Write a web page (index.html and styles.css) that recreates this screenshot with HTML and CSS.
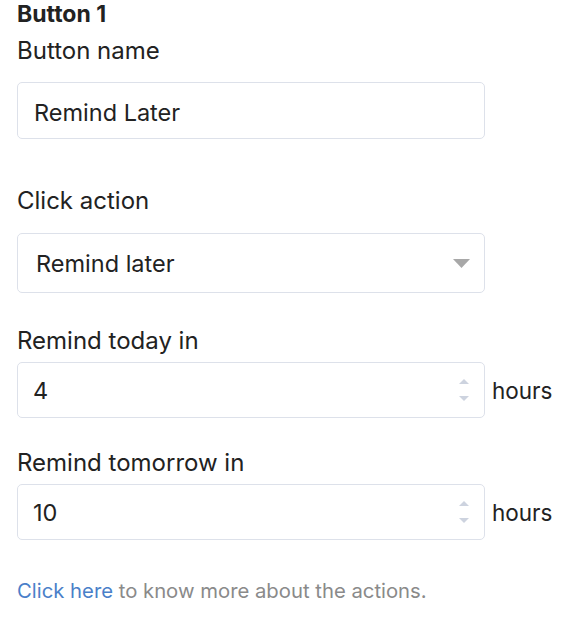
FILE: index.html
```html
<!DOCTYPE html>
<html>
<head>
    <title>Button 1</title>
    <link rel="stylesheet" href="styles.css">
</head>
<body>
    <div class="panel">
        <h3 class="title">Button 1</h3>

        <label class="field-label label-name" for="btn-name">Button name</label>
        <input class="text-box name-box" type="text" id="btn-name" value="Remind Later">

        <label class="field-label label-action" for="click-action">Click action</label>
        <div class="select-wrap">
            <select class="select-box" id="click-action">
                <option>Remind later</option>
                <option>Close</option>
                <option>Open link</option>
            </select>
            <svg class="select-arrow" width="17" height="9" viewBox="0 0 17 9">
                <path d="M0 0 L17 0 L8.5 9 Z" fill="#a8a8a8"/>
            </svg>
        </div>

        <label class="field-label label-today" for="remind-today">Remind today in</label>
        <div class="number-row">
            <div class="number-wrap">
                <input class="text-box number-box" type="text" id="remind-today" value="4">
                <svg class="spinner" width="12" height="26" viewBox="0 0 12 26">
                    <path d="M1 7 L6 2 L11 7 Z" fill="#cdd3df"/>
                    <path d="M1 19 L6 24 L11 19 Z" fill="#cdd3df"/>
                </svg>
            </div>
            <span class="unit">hours</span>
        </div>

        <label class="field-label label-tomorrow" for="remind-tomorrow">Remind tomorrow in</label>
        <div class="number-row">
            <div class="number-wrap">
                <input class="text-box number-box" type="text" id="remind-tomorrow" value="10">
                <svg class="spinner" width="12" height="26" viewBox="0 0 12 26">
                    <path d="M1 7 L6 2 L11 7 Z" fill="#cdd3df"/>
                    <path d="M1 19 L6 24 L11 19 Z" fill="#cdd3df"/>
                </svg>
            </div>
            <span class="unit">hours</span>
        </div>

        <p class="help"><a href="#">Click here</a> to know more about the actions.</p>
    </div>
</body>
</html>
```

FILE: styles.css
```css
body {
    font-family: Inter, "Open Sans", sans-serif;
    background-color: #fff;
    color: #222;
    margin: 0;
    padding: 0 0 0 17px;
}

.panel {
    width: 540px;
}

.title {
    font-size: 23px;
    font-weight: bold;
    line-height: 28px;
    margin: 0;
}

.field-label {
    display: block;
    font-size: 24px;
    line-height: 30px;
    margin-top: 6px;
}

.label-name {
    margin-top: 8px;
}

.label-action {
    margin-top: 47px;
}

.label-today {
    margin-top: 33px;
}

.label-tomorrow {
    margin-top: 30px;
}

.text-box {
    display: block;
    box-sizing: border-box;
    width: 468px;
    height: 57px;
    margin-top: 16px;
    padding: 0 16px;
    font-family: inherit;
    font-size: 23.5px;
    color: #222;
    border: 1px solid #dde1ea;
    border-radius: 5px;
    background: #fff;
    outline: none;
}

.name-box {
    padding-top: 3px;
}

.select-wrap {
    position: relative;
    width: 468px;
    margin-top: 17px;
}

.select-box {
    display: block;
    box-sizing: border-box;
    width: 468px;
    height: 60px;
    padding: 1px 18px 0;
    font-family: inherit;
    font-size: 23.5px;
    color: #222;
    border: 1px solid #dde1ea;
    border-radius: 5px;
    background: #fff;
    appearance: none;
    -webkit-appearance: none;
    outline: none;
}

.select-arrow {
    position: absolute;
    right: 15px;
    top: 26px;
    pointer-events: none;
}

.number-row {
    display: flex;
    align-items: center;
    gap: 7px;
    margin-top: 6px;
}

.number-wrap {
    position: relative;
}

.number-box {
    margin-top: 0;
    height: 56px;
    padding-left: 15px;
}

.spinner {
    position: absolute;
    right: 15px;
    top: 15px;
}

.unit {
    font-size: 22.5px;
}

.help {
    font-size: 20.3px;
    line-height: 26px;
    margin: 38px 0 0;
    color: #8a8a8a;
}

.help a {
    color: #4a7fc9;
    text-decoration: none;
}
```
